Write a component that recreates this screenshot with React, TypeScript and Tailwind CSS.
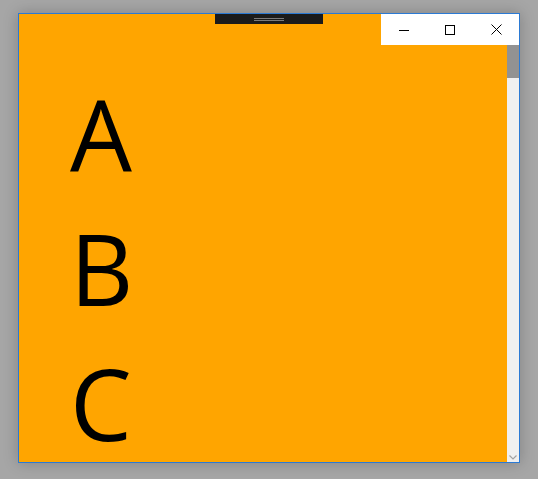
import React from 'react';

const letters = ['A', 'B', 'C'];

function WindowControls() {
  return (
    <div className="absolute top-0 right-0 flex h-[31px] w-[138px] bg-white">
      <div className="flex w-[46px] items-center justify-center">
        <svg width="10" height="10" viewBox="0 0 10 10">
          <path d="M0 5.5h10" stroke="#000" strokeWidth="1" />
        </svg>
      </div>
      <div className="flex w-[46px] items-center justify-center">
        <svg width="10" height="10" viewBox="0 0 10 10">
          <rect x="0.5" y="0.5" width="9" height="9" fill="none" stroke="#000" strokeWidth="1" />
        </svg>
      </div>
      <div className="flex w-[46px] items-center justify-center">
        <svg width="11" height="11" viewBox="0 0 11 11">
          <path d="M0.5 0.5l10 10M10.5 0.5l-10 10" stroke="#000" strokeWidth="1" />
        </svg>
      </div>
    </div>
  );
}

function Scrollbar() {
  return (
    <div className="flex w-[12px] flex-col bg-[#f0f0f0]">
      <div className="h-[31px]" />
      <div className="h-[33px] bg-[#929292]" />
      <div className="flex-1" />
      <div className="flex h-[12px] items-start justify-center pt-[5px]">
        <svg width="8" height="5" viewBox="0 0 8 5">
          <path d="M0.5 0.5l3.5 3.5 3.5-3.5" fill="none" stroke="#a3a3a3" strokeWidth="1.2" />
        </svg>
      </div>
    </div>
  );
}

export default function App() {
  return (
    <div className="h-[479px] w-[538px] bg-[#a6a6a6] pl-[18px] pt-[13px]">
      <div className="relative flex h-[450px] w-[502px] border border-[#2b7ad4] shadow-[0_0_14px_rgba(0,0,0,0.22)]">
        <div className="relative flex-1 overflow-hidden bg-[#ffa500]">
          <div
            className="pl-[51px] pt-[52px] text-[98px] leading-[135px] text-black"
            style={{ fontFamily: '"Open Sans", "Noto Sans", sans-serif' }}
          >
            {letters.map((l) => (
              <div key={l}>{l}</div>
            ))}
          </div>
          <div className="absolute left-[196px] top-0 flex h-[10px] w-[108px] flex-col items-center justify-center gap-[1px] bg-[#1b1b1b]">
            <div className="h-px w-[30px] bg-[#7a7a7a]" />
            <div className="h-px w-[30px] bg-[#7a7a7a]" />
          </div>
        </div>
        <Scrollbar />
        <WindowControls />
      </div>
    </div>
  );
}
